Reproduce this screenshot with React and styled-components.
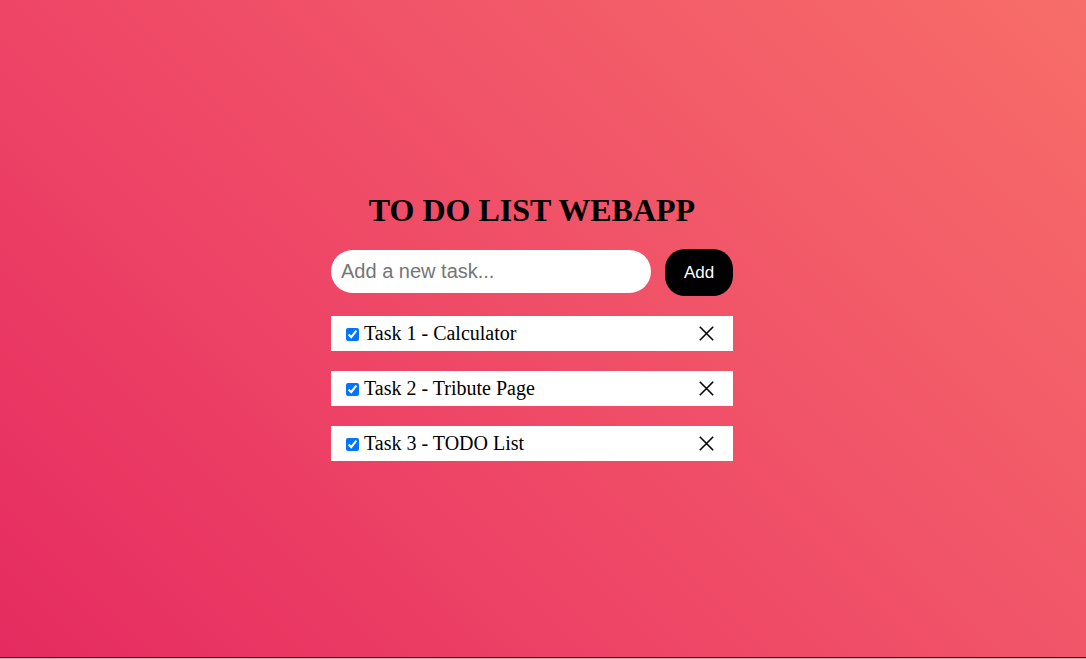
import React, { useState } from "react";
import styled, { createGlobalStyle } from "styled-components";

const Global = createGlobalStyle`
  html, body { margin: 0; padding: 0; }
  body { font-family: "Liberation Serif", "Times New Roman", serif; }
  * { box-sizing: border-box; }
`;

const Page = styled.div`
  height: 659px;
  display: flex;
  flex-direction: column;
  overflow: hidden;
`;

const Stage = styled.main`
  flex: 1;
  background: linear-gradient(45deg, #e52b60 0%, #ee4566 38%, #f15568 62%, #f76d68 100%);
  display: flex;
  justify-content: center;
  padding: 193px 22px 0 0;
`;

const Bottom = styled.div`
  height: 2px;
  border-top: 1px solid #1e1a1b;
  background: #b9b3b4;
`;

const Column = styled.div`
  width: 402px;
  display: flex;
  flex-direction: column;
`;

const Title = styled.h1`
  margin: 0;
  font-family: "Liberation Serif", "Times New Roman", serif;
  font-size: 32px;
  font-weight: bold;
  line-height: 35px;
  text-align: center;
  color: #000;
`;

const Form = styled.form`
  margin-top: 21px;
  display: flex;
  align-items: center;
  gap: 14px;
  height: 47px;
`;

const Input = styled.input`
  width: 320px;
  height: 43px;
  margin-bottom: 2px;
  border: none;
  outline: none;
  border-radius: 22px;
  padding: 0 10px;
  font-family: "Liberation Sans", Arial, sans-serif;
  font-size: 20px;
  background: #fff;
  color: #000;
  &::placeholder { color: #757575; }
`;

const AddButton = styled.button`
  width: 68px;
  height: 47px;
  border: none;
  border-radius: 20px;
  background: #000;
  color: #fff;
  font-family: "Liberation Sans", Arial, sans-serif;
  font-size: 17px;
  cursor: pointer;
  padding: 0;
`;

const List = styled.ul`
  list-style: none;
  margin: 20px 0 0;
  padding: 0;
  display: flex;
  flex-direction: column;
  gap: 20px;
`;

const Row = styled.li`
  height: 35px;
  background: #fff;
  display: flex;
  align-items: center;
  padding: 0 19px 0 11px;
`;

const Check = styled.input`
  width: 13px;
  height: 13px;
  margin: 1px 5px 0 4px;
  accent-color: #0075ff;
`;

const Label = styled.span`
  flex: 1;
  font-family: "Liberation Serif", "Times New Roman", serif;
  font-size: 20px;
  color: #000;
  line-height: 23px;
`;

const Remove = styled.button`
  width: 15px;
  height: 15px;
  padding: 0;
  border: none;
  background: none;
  display: flex;
  cursor: pointer;
`;

const tasks = ["Task 1 - Calculator", "Task 2 - Tribute Page", "Task 3 - TODO List"];

export default function App() {
  const [items] = useState(tasks);
  return (
    <Page>
      <Global />
      <Stage>
        <Column>
          <Title>TO DO LIST WEBAPP</Title>
          <Form onSubmit={(e) => e.preventDefault()}>
            <Input placeholder="Add a new task..." />
            <AddButton type="submit">Add</AddButton>
          </Form>
          <List>
            {items.map((t) => (
              <Row key={t}>
                <Check type="checkbox" defaultChecked />
                <Label>{t}</Label>
                <Remove aria-label="remove">
                  <svg width="15" height="15" viewBox="0 0 15 15">
                    <path d="M0.8 0.8 L14.2 14.2 M14.2 0.8 L0.8 14.2" stroke="#000" strokeWidth="1.6" fill="none" />
                  </svg>
                </Remove>
              </Row>
            ))}
          </List>
        </Column>
      </Stage>
      <Bottom />
    </Page>
  );
}
